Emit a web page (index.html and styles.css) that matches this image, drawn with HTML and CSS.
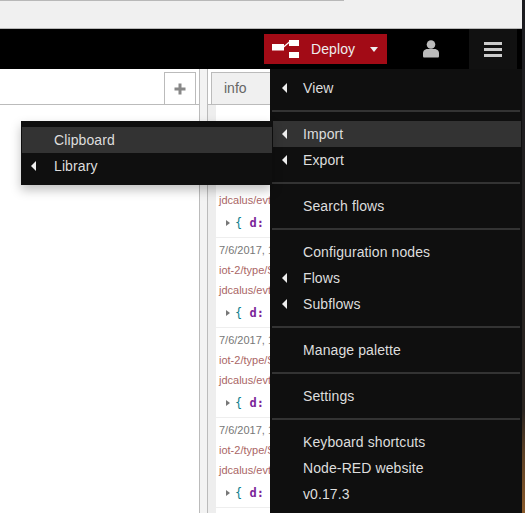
FILE: index.html
```html
<!DOCTYPE html>
<html lang="en">
  <head>
    <meta charset="UTF-8" />
    <meta name="viewport" content="width=device-width, initial-scale=1.0" />
    <title>Node-RED</title>
    <link rel="stylesheet" href="styles.css">
  </head>
  <body>
    <div class="window">
      <div class="browser-bar"><div class="browser-line"></div></div>

      <header class="header">
        <button class="deploy">
          <svg class="deploy-icon" width="27" height="18" viewBox="0 0 27 18">
            <rect x="0" y="4" width="12" height="6.5" fill="#fff" />
            <path d="M11 7.5 L18 1.5" stroke="#fff" stroke-width="1.2" fill="none" />
            <rect x="17" y="0" width="10" height="6" fill="#fff" />
            <rect x="17" y="12" width="10" height="6" fill="#fff" />
          </svg>
          <span class="deploy-label">Deploy</span>
          <span class="caret-down"></span>
        </button>
        <div class="user-btn">
          <svg width="16" height="18" viewBox="0 0 16 18">
            <circle cx="8" cy="4.5" r="4.3" fill="#bbb" />
            <path d="M1 17.5 Q0 17.5 0 16 L0 13 Q0 10 3.5 9 L12.5 9 Q16 10 16 13 L16 16 Q16 17.5 15 17.5 Z" fill="#bbb" />
          </svg>
        </div>
        <div class="menu-btn">
          <span></span><span></span><span></span>
        </div>
      </header>

      <main class="workspace">
        <section class="editor">
          <div class="tabs">
            <div class="tab-add">
              <svg width="12" height="12" viewBox="0 0 12 12">
                <path d="M4.5 0.5H7.5V4.5H11.5V7.5H7.5V11.5H4.5V7.5H0.5V4.5H4.5Z" fill="#888" />
              </svg>
            </div>
          </div>
        </section>
        <div class="separator"></div>
        <aside class="sidebar">
          <div class="tabs sidebar-tabs">
            <div class="tab-info">info</div>
          </div>
          <div class="sidebar-body">
            <div class="sidebar-gutter"></div>
            <div class="messages">
              <div class="message">
                <div class="msg-topic">jdcalus/evt/</div>
                <div class="msg-obj"><span class="msg-arrow"></span><span class="brace">{</span>&nbsp;<span class="key">d:</span></div>
              </div>
              <div class="message">
                <div class="msg-date">7/6/2017, 1</div>
                <div class="msg-topic">iot-2/type/S</div>
                <div class="msg-topic">jdcalus/evt/</div>
                <div class="msg-obj"><span class="msg-arrow"></span><span class="brace">{</span>&nbsp;<span class="key">d:</span></div>
              </div>
              <div class="message">
                <div class="msg-date">7/6/2017, 1</div>
                <div class="msg-topic">iot-2/type/S</div>
                <div class="msg-topic">jdcalus/evt/</div>
                <div class="msg-obj"><span class="msg-arrow"></span><span class="brace">{</span>&nbsp;<span class="key">d:</span></div>
              </div>
              <div class="message">
                <div class="msg-date">7/6/2017, 1</div>
                <div class="msg-topic">iot-2/type/S</div>
                <div class="msg-topic">jdcalus/evt/</div>
                <div class="msg-obj"><span class="msg-arrow"></span><span class="brace">{</span>&nbsp;<span class="key">d:</span></div>
              </div>
            </div>
          </div>
        </aside>

        <!-- main menu, drops from the hamburger button -->
        <ul class="menu main-menu">
          <li class="item has-sub">View</li>
          <li class="divider"></li>
          <li class="item has-sub active">Import</li>
          <li class="item has-sub">Export</li>
          <li class="divider"></li>
          <li class="item">Search flows</li>
          <li class="divider"></li>
          <li class="item">Configuration nodes</li>
          <li class="item has-sub">Flows</li>
          <li class="item has-sub">Subflows</li>
          <li class="divider"></li>
          <li class="item">Manage palette</li>
          <li class="divider"></li>
          <li class="item">Settings</li>
          <li class="divider"></li>
          <li class="item">Keyboard shortcuts</li>
          <li class="item">Node-RED website</li>
          <li class="item">v0.17.3</li>
        </ul>

        <!-- Import submenu -->
        <ul class="menu sub-menu">
          <li class="item active">Clipboard</li>
          <li class="item has-sub">Library</li>
        </ul>
      </main>
    </div>
  </body>
</html>
```

FILE: styles.css
```css
* {
  box-sizing: border-box;
}
html,
body {
  margin: 0;
  height: 100%;
  overflow: hidden;
}
body {
  font-family: "Liberation Sans", Arial, sans-serif;
  font-size: 14px;
  background: linear-gradient(to bottom, #1b1b20, #2a2420 80%, #5a3f25 88%, #8a5a2a 100%);
}
.window {
  width: 522px;
  height: 513px;
  display: flex;
  flex-direction: column;
  background-color: #fff;
}
.browser-bar {
  height: 29px;
  flex: none;
  background-color: #f0f0f0;
  border-bottom: 1px solid #b8b8b8;
}
.browser-line {
  width: 344px;
  height: 1px;
  background-color: #b8b8b8;
}
.header {
  height: 40px;
  flex: none;
  display: flex;
  align-items: center;
  background-color: #000;
  padding: 0 5px 0 264px;
}
.deploy {
  width: 123px;
  height: 30px;
  display: flex;
  align-items: center;
  padding: 0 8px 0 8px;
  border: none;
  background-color: #a20b16;
  color: #eee;
  font: 14px "Liberation Sans", Arial, sans-serif;
  letter-spacing: 0.1px;
}
.deploy-icon {
  flex: none;
}
.deploy-label {
  margin-left: 12px;
}
.caret-down {
  margin-left: 15px;
  border-left: 4.5px solid transparent;
  border-right: 4.5px solid transparent;
  border-top: 5px solid #eee;
}
.user-btn {
  width: 82px;
  height: 40px;
  padding-left: 6px;
  display: flex;
  align-items: center;
  justify-content: center;
}
.menu-btn {
  width: 48px;
  height: 40px;
  padding-top: 1px;
  display: flex;
  flex-direction: column;
  align-items: center;
  justify-content: center;
  gap: 3px;
  background-color: #111;
}
.menu-btn span {
  width: 18px;
  height: 3px;
  background-color: #ccc;
}
.workspace {
  position: relative;
  flex: 1;
  display: flex;
  overflow: hidden;
}
.editor {
  width: 200px;
  flex: none;
  background-color: #fff;
  border-right: 1px solid #bbb;
}
.tabs {
  height: 36px;
  display: flex;
  align-items: flex-end;
  justify-content: flex-end;
  border-bottom: 1px solid #bbb;
  padding-right: 3px;
}
.tab-add {
  width: 32px;
  height: 32px;
  display: flex;
  align-items: center;
  justify-content: center;
  border: 1px solid #bbb;
  border-bottom: none;
}
.separator {
  width: 7px;
  flex: none;
  background-color: #f3f3f3;
}
.sidebar {
  flex: 1;
  display: flex;
  flex-direction: column;
  min-width: 0;
  border-left: 1px solid #bbb;
}
.sidebar-tabs {
  justify-content: flex-start;
  padding: 0 0 0 3px;
  flex: none;
}
.tab-info {
  width: 70px;
  height: 32px;
  padding: 7px 0 0 12px;
  border: 1px solid #bbb;
  border-bottom: none;
  background-color: #f0f0f0;
  color: #666;
  font-size: 14px;
}
.sidebar-body {
  flex: 1;
  display: flex;
  min-height: 0;
}
.sidebar-gutter {
  width: 8px;
  flex: none;
  background-color: #eee;
}
.messages {
  flex: 1;
  padding-top: 83px;
  background-color: #fff;
  font-size: 11px;
  white-space: nowrap;
  overflow: hidden;
}
.message {
  padding: 2px 0 3px 3px;
  border-bottom: 1px solid #eee;
}
.msg-date {
  line-height: 20px;
  color: #777;
}
.msg-topic {
  line-height: 20px;
  color: #a66;
}
.msg-obj {
  display: flex;
  align-items: center;
  height: 22px;
  margin-top: 2px;
  padding-left: 7px;
  font-family: "DejaVu Sans Mono", monospace;
  font-size: 12px;
  color: #333;
}
.msg-arrow {
  margin-right: 5px;
  border-top: 3.5px solid transparent;
  border-bottom: 3.5px solid transparent;
  border-left: 4px solid #777;
}
.brace {
  color: #0a7d8c;
}
.key {
  color: #7a1f9a;
  font-weight: bold;
}
.menu {
  position: absolute;
  margin: 0;
  padding: 6px 0;
  list-style: none;
  background-color: #0f0f0f;
  color: #ddd;
  font-size: 14px;
  letter-spacing: 0.1px;
}
.main-menu {
  left: 270px;
  top: 0;
  width: 252px;
  height: 444px;
}
.sub-menu {
  left: 21px;
  top: 52px;
  width: 251px;
  height: 64px;
  box-shadow: 0 5px 10px rgba(0, 0, 0, 0.25);
}
.item {
  position: relative;
  height: 26px;
  line-height: 26px;
  padding-left: 33px;
}
.sub-menu .item {
  margin-left: 1px;
  padding-left: 32px;
}
.main-menu .item {
  margin: 0 1px 0 3px;
  padding-left: 30px;
}
.item.active {
  background-color: #333;
}
.item.has-sub::before {
  content: "";
  position: absolute;
  left: 9px;
  top: 8px;
  border-top: 5px solid transparent;
  border-bottom: 5px solid transparent;
  border-right: 5px solid #eee;
}
.divider {
  height: 2px;
  margin: 9px 2px;
  background-color: #333;
}
```
